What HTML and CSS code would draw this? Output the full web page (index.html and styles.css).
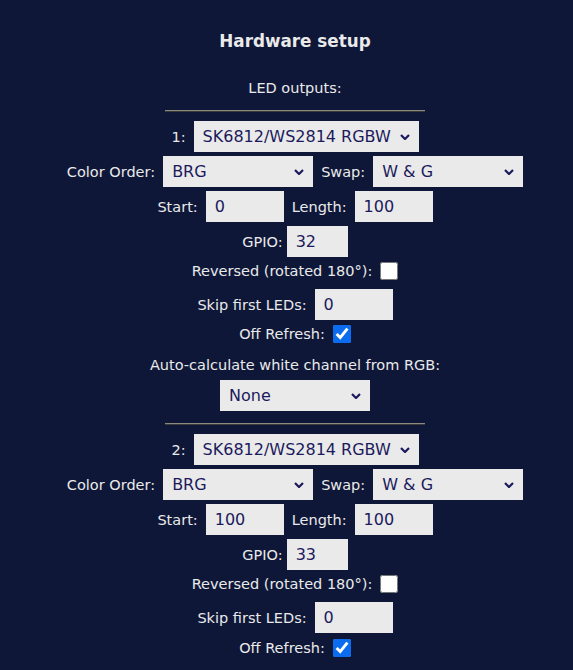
FILE: index.html
```html
<!DOCTYPE html>
<html lang="en">
<head>
  <meta charset="UTF-8" />
  <meta name="viewport" content="width=device-width, initial-scale=1.0"/>
  <title>LED Settings</title>
  <link rel="stylesheet" href="styles.css">
</head>
<body>
  <div class="page">
    <h2>Hardware setup</h2>
    <div class="caption">LED outputs:</div>

    <div class="output">
      <hr>
      <div class="row">
        <span>1:</span>
        <select class="sel-type"><option>SK6812/WS2814 RGBW</option></select>
      </div>
      <div class="row">
        <span>Color Order:</span>
        <select class="sel-wide"><option>BRG</option></select>
        <span>Swap:</span>
        <select class="sel-wide"><option>W &amp; G</option></select>
      </div>
      <div class="row">
        <span>Start:</span>
        <input type="number" class="num" value="0">
        <span>Length:</span>
        <input type="number" class="num" value="100">
      </div>
      <div class="row row-tight">
        <span>GPIO:</span>
        <input type="number" class="num-short" value="32">
      </div>
      <div class="row row-check">
        <span>Reversed (rotated 180°):</span>
        <input type="checkbox">
      </div>
      <div class="row">
        <span>Skip first LEDs:</span>
        <input type="number" class="num" value="0">
      </div>
      <div class="row row-check">
        <span>Off Refresh:</span>
        <input type="checkbox" checked>
      </div>
      <div class="row row-text">
        <span>Auto-calculate white channel from RGB:</span>
      </div>
      <div class="row">
        <select class="sel-wide"><option>None</option></select>
      </div>
    </div>

    <div class="output">
      <hr>
      <div class="row">
        <span>2:</span>
        <select class="sel-type"><option>SK6812/WS2814 RGBW</option></select>
      </div>
      <div class="row">
        <span>Color Order:</span>
        <select class="sel-wide"><option>BRG</option></select>
        <span>Swap:</span>
        <select class="sel-wide"><option>W &amp; G</option></select>
      </div>
      <div class="row">
        <span>Start:</span>
        <input type="number" class="num" value="100">
        <span>Length:</span>
        <input type="number" class="num" value="100">
      </div>
      <div class="row row-tight">
        <span>GPIO:</span>
        <input type="number" class="num-short" value="33">
      </div>
      <div class="row row-check">
        <span>Reversed (rotated 180°):</span>
        <input type="checkbox">
      </div>
      <div class="row">
        <span>Skip first LEDs:</span>
        <input type="number" class="num" value="0">
      </div>
      <div class="row row-check">
        <span>Off Refresh:</span>
        <input type="checkbox" checked>
      </div>
    </div>
  </div>
</body>
</html>
```

FILE: styles.css
```css
body {
  font-family: "DejaVu Sans", Verdana, sans-serif;
  font-size: 14.5px;
  background-color: #0e1738;
  color: #eaeaea;
  margin: 0;
  padding: 0;
}
.page {
  padding: 30px 0 0 17px;
  text-align: center;
}
h2 {
  font-size: 16.8px;
  font-weight: bold;
  margin: 0 0 26px;
  line-height: 22px;
}
.caption {
  line-height: 20px;
  margin-bottom: 12px;
}
hr {
  width: 260px;
  height: 0;
  margin: 0 auto 9px;
  border: none;
  border-top: 1px solid #8a8a80;
  border-bottom: 1px solid #3a3a3a;
}
.output {
  margin-bottom: 12px;
}
.row {
  display: flex;
  justify-content: center;
  align-items: center;
  gap: 8px;
  margin-bottom: 4px;
}
.row-tight {
  gap: 4px;
}
.row-check {
  margin: 5px 0 9px;
}
.row-check:last-child {
  margin-top: 6px;
}
.row-text {
  margin: 14px 0 7px;
}
select, input[type=number] {
  font-family: "DejaVu Sans", Verdana, sans-serif;
  font-size: 16px;
  color: #1c1a5c;
  background: #eaeaea;
  border: none;
  border-radius: 0;
  height: 31px;
  padding: 0 9px;
  box-sizing: border-box;
  outline: none;
}
input[type=number] {
  -moz-appearance: textfield;
}
input[type=number]::-webkit-inner-spin-button,
input[type=number]::-webkit-outer-spin-button {
  -webkit-appearance: none;
  margin: 0;
}
select {
  -webkit-appearance: none;
  appearance: none;
  background-image: url("data:image/svg+xml,%3Csvg xmlns='http://www.w3.org/2000/svg' width='10' height='6' viewBox='0 0 10 6'%3E%3Cpath d='M1 1l4 4 4-4' fill='none' stroke='%231c1a5c' stroke-width='2.2'/%3E%3C/svg%3E");
  background-repeat: no-repeat;
  background-position: right 9px center;
  padding-right: 24px;
}
.sel-type {
  width: 225px;
}
.sel-wide {
  width: 150px;
}
.num {
  width: 78px;
}
.num-short {
  width: 61px;
}
input[type=checkbox] {
  width: 18px;
  height: 18px;
  margin: 0;
  accent-color: #0b6cf0;
}
```
